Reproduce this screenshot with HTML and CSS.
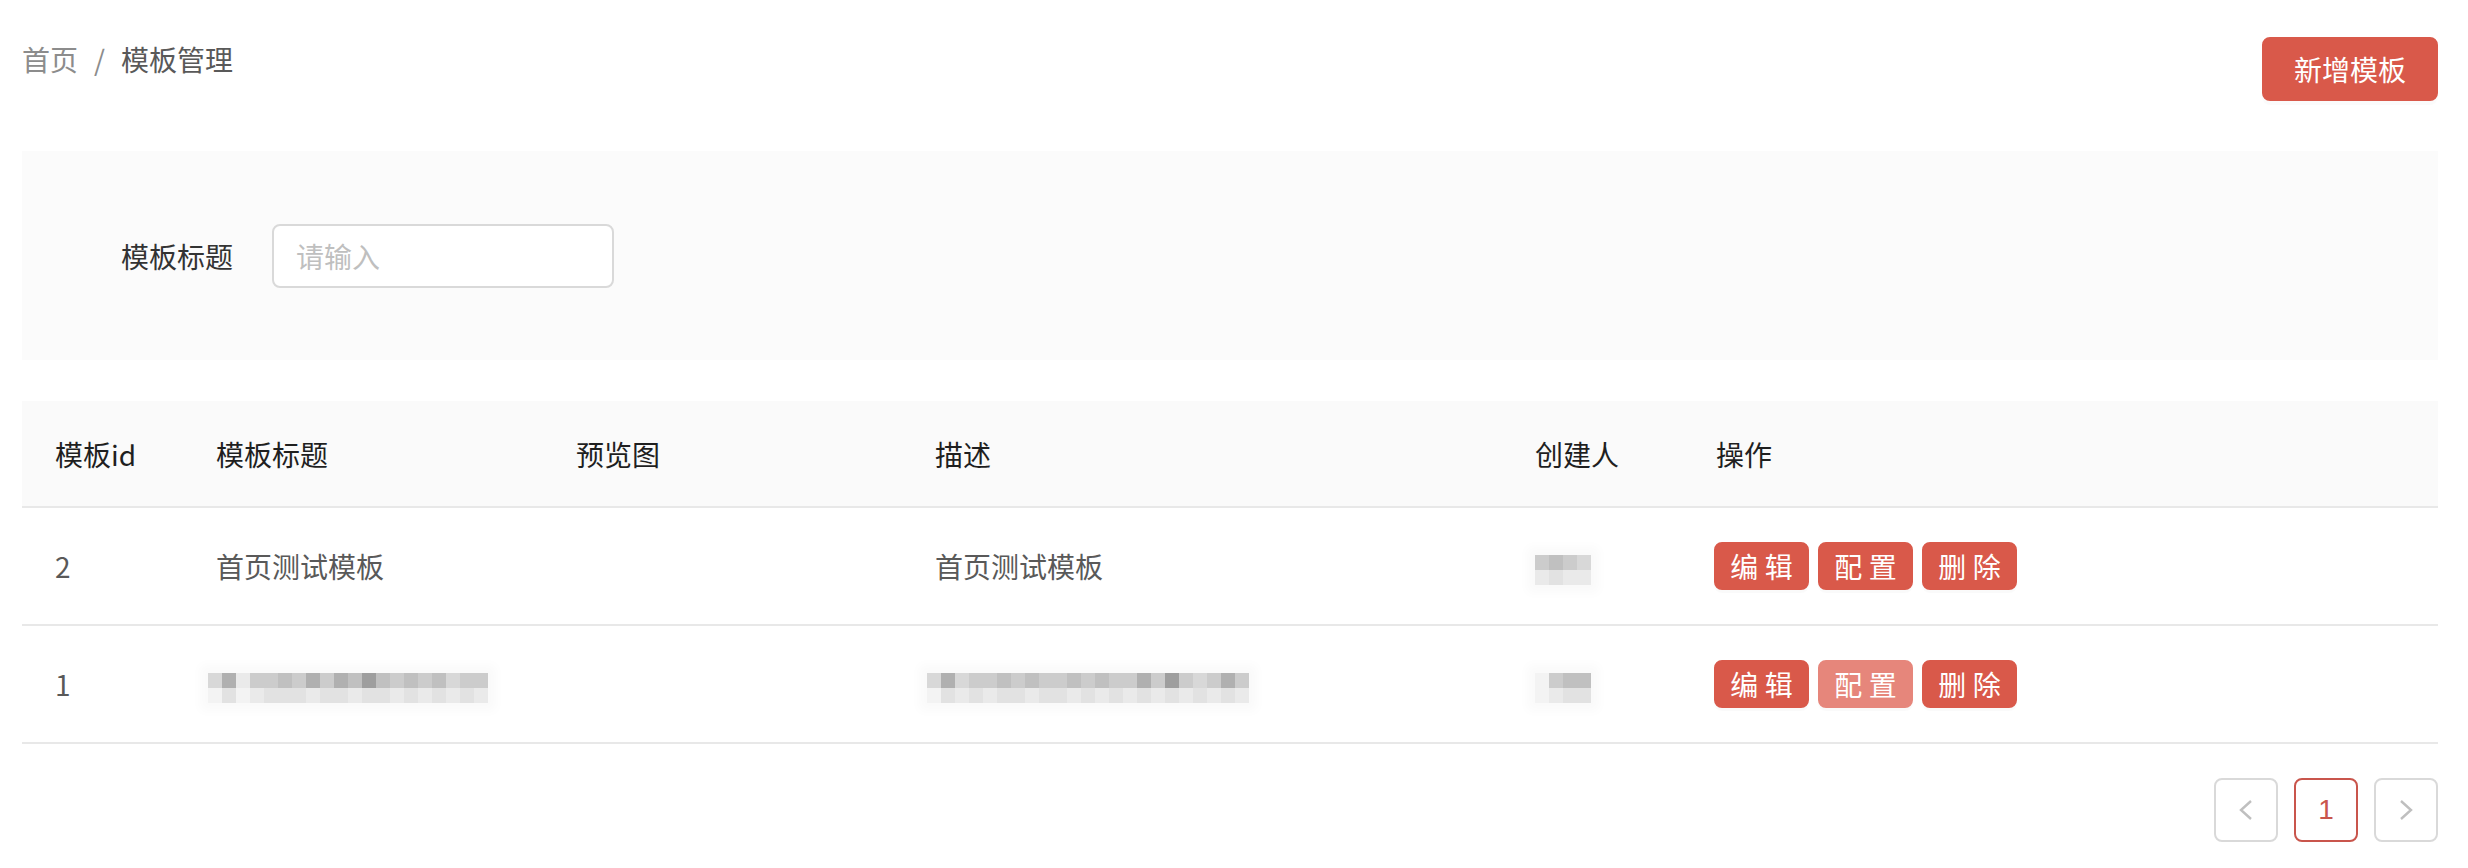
FILE: index.html
```html
<!DOCTYPE html>
<html lang="zh-CN">
<head>
<meta charset="utf-8">
<title>模板管理</title>
<link rel="stylesheet" href="styles.css">
</head>
<body>
<div class="page">
  <div class="topbar">
    <div class="breadcrumb">
      <span class="crumb-link">首页</span>
      <span class="crumb-sep">/</span>
      <span class="crumb-current">模板管理</span>
    </div>
    <button class="btn-primary">新增模板</button>
  </div>

  <div class="filter-panel">
    <label class="filter-label">模板标题</label>
    <div class="filter-input">请输入</div>
  </div>

  <div class="table">
    <div class="row head">
      <div class="cell">模板id</div>
      <div class="cell">模板标题</div>
      <div class="cell">预览图</div>
      <div class="cell">描述</div>
      <div class="cell">创建人</div>
      <div class="cell">操作</div>
    </div>
    <div class="row body">
      <div class="cell">2</div>
      <div class="cell">首页测试模板</div>
      <div class="cell"></div>
      <div class="cell">首页测试模板</div>
      <div class="cell">
        <div class="blur">
          <div class="blur-row"><span class="c s3"></span><span class="c s2"></span><span class="c s3"></span><span class="c s4"></span></div>
          <div class="blur-row"><span class="c s6"></span><span class="c s5"></span><span class="c s6"></span><span class="c s6"></span></div>
        </div>
      </div>
      <div class="cell actions">
        <button class="btn-sm">编 辑</button>
        <button class="btn-sm">配 置</button>
        <button class="btn-sm">删 除</button>
      </div>
    </div>
    <div class="row body">
      <div class="cell">1</div>
      <div class="cell">
        <div class="blur shift">
          <div class="blur-row"><span class="c s4"></span><span class="c s1"></span><span class="c s6"></span><span class="c s3"></span><span class="c s3"></span><span class="c s2"></span><span class="c s3"></span><span class="c s1"></span><span class="c s3"></span><span class="c s1"></span><span class="c s2"></span><span class="c s0"></span><span class="c s2"></span><span class="c s3"></span><span class="c s2"></span><span class="c s3"></span><span class="c s2"></span><span class="c s4"></span><span class="c s3"></span><span class="c s3"></span></div>
          <div class="blur-row"><span class="c s7"></span><span class="c s5"></span><span class="c s7"></span><span class="c s6"></span><span class="c s5"></span><span class="c s5"></span><span class="c s5"></span><span class="c s6"></span><span class="c s5"></span><span class="c s5"></span><span class="c s6"></span><span class="c s5"></span><span class="c s5"></span><span class="c s6"></span><span class="c s5"></span><span class="c s6"></span><span class="c s5"></span><span class="c s6"></span><span class="c s5"></span><span class="c s6"></span></div>
        </div>
      </div>
      <div class="cell"></div>
      <div class="cell">
        <div class="blur shift">
          <div class="blur-row"><span class="c s4"></span><span class="c s1"></span><span class="c s4"></span><span class="c s3"></span><span class="c s3"></span><span class="c s2"></span><span class="c s3"></span><span class="c s2"></span><span class="c s3"></span><span class="c s3"></span><span class="c s2"></span><span class="c s3"></span><span class="c s2"></span><span class="c s3"></span><span class="c s3"></span><span class="c s1"></span><span class="c s3"></span><span class="c s0"></span><span class="c s3"></span><span class="c s4"></span><span class="c s3"></span><span class="c s1"></span><span class="c s3"></span></div>
          <div class="blur-row"><span class="c s7"></span><span class="c s5"></span><span class="c s6"></span><span class="c s5"></span><span class="c s6"></span><span class="c s5"></span><span class="c s5"></span><span class="c s6"></span><span class="c s5"></span><span class="c s5"></span><span class="c s6"></span><span class="c s5"></span><span class="c s6"></span><span class="c s5"></span><span class="c s6"></span><span class="c s5"></span><span class="c s6"></span><span class="c s5"></span><span class="c s6"></span><span class="c s5"></span><span class="c s6"></span><span class="c s5"></span><span class="c s6"></span></div>
        </div>
      </div>
      <div class="cell">
        <div class="blur">
          <div class="blur-row"><span class="c s7"></span><span class="c s3"></span><span class="c s2"></span><span class="c s2"></span></div>
          <div class="blur-row"><span class="c s7"></span><span class="c s6"></span><span class="c s5"></span><span class="c s5"></span></div>
        </div>
      </div>
      <div class="cell actions">
        <button class="btn-sm">编 辑</button>
        <button class="btn-sm btn-light">配 置</button>
        <button class="btn-sm">删 除</button>
      </div>
    </div>
  </div>

  <div class="pager">
    <div class="pager-item arrow">
      <svg width="20" height="24" viewBox="0 0 20 24"><path d="M15 3 L5 12 L15 21" fill="none" stroke="#bfbfbf" stroke-width="2.4"/></svg>
    </div>
    <div class="pager-item active">1</div>
    <div class="pager-item arrow">
      <svg width="20" height="24" viewBox="0 0 20 24"><path d="M5 3 L15 12 L5 21" fill="none" stroke="#bfbfbf" stroke-width="2.4"/></svg>
    </div>
  </div>
</div>
</body>
</html>
```

FILE: styles.css
```css
* { box-sizing: border-box; }
html, body { margin: 0; padding: 0; background: #fff; }
body {
  font-family: "Noto Sans CJK SC", "Noto Sans", sans-serif;
  font-size: 28px;
  color: #595959;
}
.page {
  padding: 37px 30px 0 22px;
}
.topbar {
  display: flex;
  justify-content: space-between;
  align-items: flex-start;
}
.breadcrumb {
  display: flex;
  align-items: center;
  line-height: 44px;
  height: 44px;
}
.crumb-link { color: #8c8c8c; }
.crumb-sep { color: #8c8c8c; margin: 0 16px; }
.crumb-current { color: #595959; }
.btn-primary {
  font-family: inherit;
  font-size: 28px;
  color: #fff;
  background: #d9594a;
  border: 2px solid #d9594a;
  border-radius: 8px;
  height: 64px;
  width: 176px;
  padding: 0;
  line-height: 1;
  box-shadow: 0 4px 0 rgba(0,0,0,0.015);
}
.filter-panel {
  margin-top: 50px;
  background: #fbfbfb;
  height: 209px;
  display: flex;
  align-items: center;
}
.filter-label {
  width: 211px;
  text-align: right;
  color: #333;
  margin-right: 39px;
}
.filter-input {
  width: 342px;
  height: 64px;
  background: #fff;
  border: 2px solid #d9d9d9;
  border-radius: 8px;
  padding: 0 22px;
  display: flex;
  align-items: center;
  color: #bfbfbf;
}
.table {
  margin-top: 41px;
}
.row {
  display: grid;
  grid-template-columns: 161px 360px 359px 600px 181px 1fr;
  align-items: center;
  border-bottom: 2px solid #e8e8e8;
}
.row.head {
  height: 107px;
  background: #fafafa;
  color: #1f1f1f;
  font-weight: 400;
}
.row.body {
  height: 118px;
}
.cell {
  padding-left: 33px;
  line-height: 44px;
  white-space: nowrap;
}
.actions {
  display: flex;
  gap: 9px;
  padding-left: 31px;
}
.btn-sm {
  font-family: inherit;
  font-size: 28px;
  color: #fff;
  background: #d9594a;
  border: 2px solid #d9594a;
  border-radius: 8px;
  height: 48px;
  width: 95px;
  padding: 0;
  line-height: 1;
  box-shadow: 0 3px 0 rgba(0,0,0,0.02);
}
.btn-light {
  background: #e6867b;
  border-color: #e6867b;
}
.blur {
  display: inline-flex;
  flex-direction: column;
  vertical-align: middle;
  box-shadow: 0 0 10px 8px #fafafa;
  background: #fafafa;
}
.blur.shift { margin-left: -8px; }
.blur-row { display: flex; }
.c { display: block; width: 14px; height: 15px; }
.s0 { background: #9e9e9e; }
.s1 { background: #b0b0b0; }
.s2 { background: #c0c0c0; }
.s3 { background: #cccccc; }
.s4 { background: #d8d8d8; }
.s5 { background: #e2e2e2; }
.s6 { background: #eaeaea; }
.s7 { background: #f3f3f3; }
.pager {
  display: flex;
  justify-content: flex-end;
  gap: 16px;
  margin-top: 34px;
}
.pager-item {
  width: 64px;
  height: 64px;
  border: 2px solid #d9d9d9;
  border-radius: 8px;
  display: flex;
  align-items: center;
  justify-content: center;
  font-family: "Liberation Sans", Arial, sans-serif;
  font-size: 28px;
}
.pager-item.active {
  border-color: #c9554c;
  color: #c9554c;
}
```
